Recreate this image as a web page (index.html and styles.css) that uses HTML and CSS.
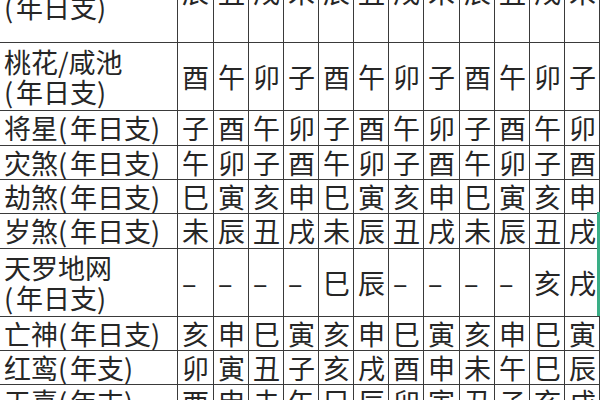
FILE: index.html
```html
<!DOCTYPE html>
<html lang="zh">
<head>
<meta charset="utf-8">
<title>神煞表</title>
<link rel="stylesheet" href="styles.css">
</head>
<body>
<div class="view">
  <div class="sheet">
    <div class="label"><span class="t">华盖<br><span class="p">(</span>年日支<span class="p">)</span></span></div>
    <div class="cell">辰</div><div class="cell">丑</div><div class="cell">戌</div><div class="cell">未</div><div class="cell">辰</div><div class="cell">丑</div><div class="cell">戌</div><div class="cell">未</div><div class="cell">辰</div><div class="cell">丑</div><div class="cell">戌</div><div class="cell">未</div>

    <div class="label"><span class="t">桃花/咸池<br><span class="p">(</span>年日支<span class="p">)</span></span></div>
    <div class="cell">酉</div><div class="cell">午</div><div class="cell">卯</div><div class="cell">子</div><div class="cell">酉</div><div class="cell">午</div><div class="cell">卯</div><div class="cell">子</div><div class="cell">酉</div><div class="cell">午</div><div class="cell">卯</div><div class="cell">子</div>

    <div class="label"><span class="t">将星<span class="p">(</span>年日支<span class="p">)</span></span></div>
    <div class="cell">子</div><div class="cell">酉</div><div class="cell">午</div><div class="cell">卯</div><div class="cell">子</div><div class="cell">酉</div><div class="cell">午</div><div class="cell">卯</div><div class="cell">子</div><div class="cell">酉</div><div class="cell">午</div><div class="cell">卯</div>

    <div class="label"><span class="t">灾煞<span class="p">(</span>年日支<span class="p">)</span></span></div>
    <div class="cell">午</div><div class="cell">卯</div><div class="cell">子</div><div class="cell">酉</div><div class="cell">午</div><div class="cell">卯</div><div class="cell">子</div><div class="cell">酉</div><div class="cell">午</div><div class="cell">卯</div><div class="cell">子</div><div class="cell">酉</div>

    <div class="label"><span class="t">劫煞<span class="p">(</span>年日支<span class="p">)</span></span></div>
    <div class="cell">巳</div><div class="cell">寅</div><div class="cell">亥</div><div class="cell">申</div><div class="cell">巳</div><div class="cell">寅</div><div class="cell">亥</div><div class="cell">申</div><div class="cell">巳</div><div class="cell">寅</div><div class="cell">亥</div><div class="cell">申</div>

    <div class="label"><span class="t">岁煞<span class="p">(</span>年日支<span class="p">)</span></span></div>
    <div class="cell">未</div><div class="cell">辰</div><div class="cell">丑</div><div class="cell">戌</div><div class="cell">未</div><div class="cell">辰</div><div class="cell">丑</div><div class="cell">戌</div><div class="cell">未</div><div class="cell">辰</div><div class="cell">丑</div><div class="cell">戌</div>

    <div class="label"><span class="t">天罗地网<br><span class="p">(</span>年日支<span class="p">)</span></span></div>
    <div class="cell">–</div><div class="cell">–</div><div class="cell">–</div><div class="cell">–</div><div class="cell">巳</div><div class="cell">辰</div><div class="cell">–</div><div class="cell">–</div><div class="cell">–</div><div class="cell">–</div><div class="cell">亥</div><div class="cell">戌</div>

    <div class="label"><span class="t">亡神<span class="p">(</span>年日支<span class="p">)</span></span></div>
    <div class="cell">亥</div><div class="cell">申</div><div class="cell">巳</div><div class="cell">寅</div><div class="cell">亥</div><div class="cell">申</div><div class="cell">巳</div><div class="cell">寅</div><div class="cell">亥</div><div class="cell">申</div><div class="cell">巳</div><div class="cell">寅</div>

    <div class="label"><span class="t">红鸾<span class="p">(</span>年支<span class="p">)</span></span></div>
    <div class="cell">卯</div><div class="cell">寅</div><div class="cell">丑</div><div class="cell">子</div><div class="cell">亥</div><div class="cell">戌</div><div class="cell">酉</div><div class="cell">申</div><div class="cell">未</div><div class="cell">午</div><div class="cell">巳</div><div class="cell">辰</div>

    <div class="label"><span class="t">天喜<span class="p">(</span>年支<span class="p">)</span></span></div>
    <div class="cell">酉</div><div class="cell">申</div><div class="cell">未</div><div class="cell">午</div><div class="cell">巳</div><div class="cell">辰</div><div class="cell">卯</div><div class="cell">寅</div><div class="cell">丑</div><div class="cell">子</div><div class="cell">亥</div><div class="cell">戌</div>
  </div>
  <div class="selection-edge"></div>
</div>
</body>
</html>
```

FILE: styles.css
```css
html, body {
  margin: 0;
  padding: 0;
  background: #ffffff;
}

.view {
  position: relative;
  width: 600px;
  height: 400px;
  overflow: hidden;
}

.sheet {
  display: grid;
  grid-template-columns: 177px 35px repeat(6, 34px) 35px repeat(4, 34px);
  grid-template-rows: 100px 67px 34px 33px 33px 34px 67px 33px 33px 34px;
  gap: 1px;
  padding-right: 1px;
  width: max-content;
  margin-top: -58px;
  background: #3a3a3a;
  font-family: "Noto Sans CJK SC", "Noto Sans", sans-serif;
  font-size: 27px;
  line-height: 30px;
  color: #262626;
}

.label,
.cell {
  background: #ffffff;
  display: flex;
  align-items: center;
  padding-left: 4px;
  white-space: nowrap;
}

.t {
  display: block;
}

.p {
  display: inline-block;
  width: 12px;
  text-align: left;
}

.selection-edge {
  position: absolute;
  left: 597px;
  top: 212px;
  width: 3px;
  height: 104px;
  background: #3aae86;
}
```
